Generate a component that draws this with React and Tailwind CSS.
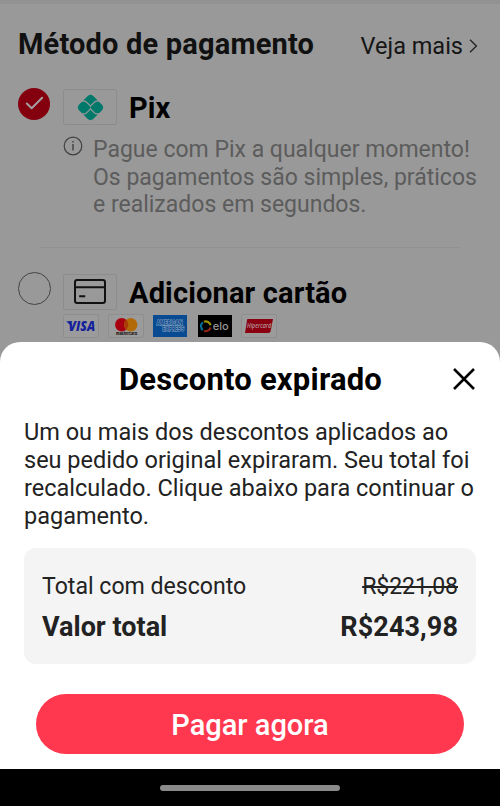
import { Check } from 'lucide-react'

// Bandeiras aceitas no pagamento com cartão
const BRANDS = [
  { name: 'visa', logo: <VisaLogo /> },
  { name: 'mastercard', logo: <MastercardLogo /> },
  { name: 'amex', logo: <AmexLogo /> },
  { name: 'elo', logo: <EloLogo /> },
  { name: 'hipercard', logo: <HipercardLogo /> },
]

function VisaLogo() {
  return (
    <svg viewBox="0 0 36 24" className="block h-6 w-9">
      <rect x="0.5" y="0.5" width="35" height="23" rx="1.5" fill="#9b9b9b" stroke="#8e8e8e" />
      <path d="M3.2 7.2h4.2l1.6 5.6z" fill="#15219b" />
      <text x="5.6" y="16.9" fontFamily="'Open Sans', sans-serif" fontSize="13.5" fontWeight="800" fontStyle="italic" fill="#15219b" textLength="26.5" lengthAdjust="spacingAndGlyphs">VISA</text>
    </svg>
  )
}

function MastercardLogo() {
  return (
    <svg viewBox="0 0 36 24" className="block h-6 w-9">
      <rect x="0.5" y="0.5" width="35" height="23" rx="1.5" fill="#9b9b9b" stroke="#8e8e8e" />
      <circle cx="13.7" cy="10.7" r="6.7" fill="#a80010" />
      <circle cx="22.7" cy="10.7" r="6.7" fill="#b26a06" />
      <path d="M18.2 5.8a6.7 6.7 0 0 1 0 9.8a6.7 6.7 0 0 1 0-9.8z" fill="#a93e08" />
      <text x="8" y="20.8" fontFamily="Inter, sans-serif" fontSize="4" fontWeight="800" fill="#1c1513" textLength="21" lengthAdjust="spacingAndGlyphs">mastercard</text>
    </svg>
  )
}

function AmexLogo() {
  return (
    <svg viewBox="0 0 36 24" className="block h-6 w-9">
      <rect x="1" y="1" width="34" height="22" fill="#084b92" />
      <g fontFamily="Inter, sans-serif" fontSize="5.8" fontWeight="800" fill="#084b92" stroke="#91a9c1" strokeWidth="0.9" paintOrder="stroke">
        <text x="4.5" y="10.8" textLength="26" lengthAdjust="spacingAndGlyphs">AMERICAN</text>
        <text x="10.5" y="17.2" textLength="21.5" lengthAdjust="spacingAndGlyphs">EXPRESS</text>
      </g>
    </svg>
  )
}

function EloLogo() {
  return (
    <svg viewBox="0 0 36 24" className="block h-6 w-9">
      <rect x="1" y="1" width="34" height="22" fill="#000" />
      <g fill="none" strokeWidth="2.2">
        <path d="M6.9 7.7a5 5 0 0 1 6.7 3.6" stroke="#998f00" />
        <path d="M5.9 8.3a5 5 0 0 0 0 7.9" stroke="#006b91" />
        <path d="M13.5 13.4a5 5 0 0 1-6.3 3.6" stroke="#912314" />
      </g>
      <text x="15.8" y="16.4" fontFamily="Inter, sans-serif" fontSize="11" fontWeight="500" fill="#979797" textLength="16" lengthAdjust="spacingAndGlyphs">elo</text>
    </svg>
  )
}

function HipercardLogo() {
  return (
    <svg viewBox="0 0 36 24" className="block h-6 w-9">
      <rect x="0.5" y="0.5" width="35" height="23" rx="1.5" fill="#9b9b9b" stroke="#8e8e8e" />
      <path d="M6.5 5H32l-2.4 12.2q-.4 1.8-2.2 1.8H4l2-12.8q.2-1.2.5-1.2z" fill="#8b0011" />
      <text x="6" y="14" fontFamily="'Open Sans', sans-serif" fontSize="6.4" fontWeight="600" fontStyle="italic" fill="#b2999b" textLength="24" lengthAdjust="spacingAndGlyphs">Hipercard</text>
    </svg>
  )
}

function PixIcon() {
  return (
    <svg viewBox="0 0 26 26" className="h-[27px] w-[27px]" fill="#00796b">
      <path d="M6 6.2L10.4 1.9q2.6-2.2 5.2 0L20 6.2h-1q-1.3 0-2.1.8L13 10.9 9.1 7q-.8-.8-2.1-.8z" />
      <path d="M6 19.8l4.4 4.3q2.6 2.2 5.2 0l4.4-4.3h-1q-1.3 0-2.1-.8L13 15.1 9.1 19q-.8.8-2.1.8z" />
      <path d="M4.8 7.4h2.3q.8 0 1.4.6l3.9 3.9q1.1 1.1 0 2.2L8.5 18q-.6.6-1.4.6H4.8l-2.9-3q-2.2-2.6 0-5.2z" />
      <path d="M21.2 7.4h-2.3q-.8 0-1.4.6l-3.9 3.9q-1.1 1.1 0 2.2l3.9 3.9q.6.6 1.4.6h2.3l2.9-3q2.2-2.6 0-5.2z" />
    </svg>
  )
}

function CardIcon() {
  return (
    <svg viewBox="0 0 32 25" className="h-[25px] w-8" fill="none" stroke="#111" strokeWidth="2">
      <rect x="1" y="1" width="30" height="23" rx="2.2" />
      <path d="M1 8.2h30M5.2 17.3h6" />
    </svg>
  )
}

function InfoIcon() {
  return (
    <svg viewBox="0 0 20 20" className="h-5 w-5 shrink-0" fill="none" stroke="#414141" strokeWidth="1.2">
      <circle cx="10" cy="10" r="8.8" />
      <path d="M10 8.1v6.5M10 5v1.6" strokeWidth="1.4" />
    </svg>
  )
}

function PaymentMethods() {
  return (
    <section className="h-[342px] border-t-4 border-[#929292] bg-[#999999]">
      <div className="flex items-center justify-between pt-[22px] pr-[22px] pl-[18px]">
        <h1 className="text-[29px] leading-9 font-bold tracking-[0.18px] whitespace-nowrap text-[#111]">Método de pagamento</h1>
        <a className="mt-1 flex items-center text-[23.5px] leading-8 whitespace-nowrap text-[#151515]">
          Veja mais
          <svg viewBox="0 0 10 14" className="ml-[5px] h-[14px] w-[10px]" fill="none" stroke="#222" strokeWidth="1.3">
            <path d="M2 .8L8.4 7 2 13.2" />
          </svg>
        </a>
      </div>

      <div className="mt-[27px] flex h-9 items-center pl-[18px]">
        <span className="-mt-[7px] flex h-8 w-8 items-center justify-center rounded-full bg-[#85000f]">
          <Check size={23} strokeWidth={2} color="#a2a2a2" />
        </span>
        <span className="ml-[13px] flex h-9 w-[54px] items-center justify-center rounded-[2px] border border-[#8c8c8c]">
          <PixIcon />
        </span>
        <span className="mt-1 ml-3 text-[29px] font-bold tracking-[0.1px] text-black">Pix</span>
      </div>

      <div className="mt-[11px] flex pl-[63px] text-[#5c5c5c]">
        <InfoIcon />
        <p className="ml-[10px] text-[23px] leading-[27.5px] whitespace-nowrap">
          Pague com Pix a qualquer momento!
          <br />
          Os pagamentos são simples, práticos
          <br />
          e realizados em segundos.
        </p>
      </div>

      <hr className="mx-10 mt-[28px] border-[#919191]" />

      <div className="mt-[26px] flex h-9 items-center pl-[18px]">
        <span className="-mt-[7px] h-[33px] w-[33px] rounded-full border border-[#444]" />
        <span className="ml-3 flex h-9 w-[54px] items-center justify-center rounded-[2px] border border-[#8c8c8c]">
          <CardIcon />
        </span>
        <span className="mt-1 ml-3 text-[29px] font-bold tracking-[0.15px] whitespace-nowrap text-black">Adicionar cartão</span>
      </div>
      <div className="mt-1 flex gap-[8.5px] pl-[63px]">
        {BRANDS.map((b) => (
          <span key={b.name}>{b.logo}</span>
        ))}
      </div>
    </section>
  )
}

function ExpiredSheet() {
  return (
    <section className="h-[427px] rounded-t-[20px] bg-white">
      <header className="flex items-center justify-between pt-[19px] pr-6 pl-[119px]">
        <h2 className="pt-0.5 text-[31px] leading-[34px] font-bold tracking-[0.2px] whitespace-nowrap text-black">Desconto expirado</h2>
        <button aria-label="Fechar">
          <svg viewBox="0 0 24 24" className="h-6 w-6" stroke="#000" strokeWidth="2.5">
            <path d="M2 2l20 20M22 2L2 22" />
          </svg>
        </button>
      </header>

      <p className="mt-[21px] pl-6 text-[23.5px] leading-7 whitespace-nowrap text-[#222]">
        Um ou mais dos descontos aplicados ao
        <br />
        seu pedido original expiraram. Seu total foi
        <br />
        recalculado. Clique abaixo para continuar o
        <br />
        pagamento.
      </p>

      <div className="mx-6 mt-[18px] flex h-[116px] flex-col rounded-xl bg-[#f4f4f4] px-[18px] pt-[19px] text-[#222]">
        <div className="flex justify-between text-[23.1px] leading-10">
          <span>Total com desconto</span>
          <span className="tracking-[-0.1px] line-through decoration-[1.5px]">R$221,08</span>
        </div>
        <div className="flex justify-between text-[27px] leading-10 font-bold">
          <span>Valor total</span>
          <span className="tracking-[0.1px]">R$243,98</span>
        </div>
      </div>

      <button className="mx-9 mt-[30px] flex h-[60px] w-[428px] items-center justify-center rounded-full bg-[#ff384f] pt-1 text-[29px] font-medium text-white">
        Pagar agora
      </button>
    </section>
  )
}

export default function App() {
  return (
    <main className="flex h-[806px] w-[500px] flex-col overflow-hidden bg-[#999999] font-[Roboto,sans-serif]">
      <PaymentMethods />
      <ExpiredSheet />
      {/* barra de gestos do sistema */}
      <div className="flex h-[37px] items-center justify-center bg-black">
        <div className="h-1.5 w-[180px] rounded-full bg-[#8a8a8a]" />
      </div>
    </main>
  )
}
